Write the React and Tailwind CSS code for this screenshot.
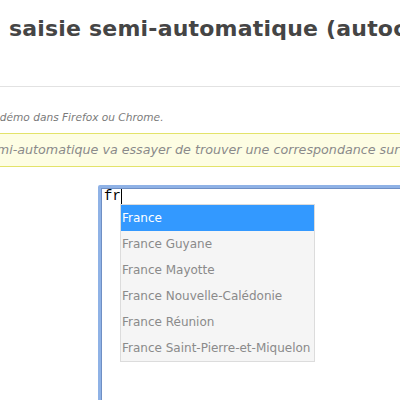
import React from 'react';

const items = [
  'France',
  'France Guyane',
  'France Mayotte',
  'France Nouvelle-Calédonie',
  'France Réunion',
  'France Saint-Pierre-et-Miquelon',
];

export default function App() {
  return (
    <div className="w-[400px] h-[400px] overflow-hidden bg-white relative font-['DejaVu_Sans',sans-serif]">
      {/* Titre */}
      <div className="h-[87px] border-b border-[#e2e2e2] pt-[16px]">
        <h1 className="whitespace-nowrap ml-[-23px] text-[22px] leading-[26px] font-bold text-[#454545] tracking-[0.2px]">
          3. saisie semi-automatique (autocomplétion)
        </h1>
      </div>

      {/* Paragraphe */}
      <p className="mt-[23px] ml-[-13px] whitespace-nowrap italic text-[10.6px] leading-[14px] text-[#7a7a7a]">
        la démo dans Firefox ou Chrome.
      </p>

      {/* Note */}
      <div className="mt-[9px] ml-[-10px] w-[430px] h-[34px] bg-[#fdfde3] border-y border-[#e3e36a] flex items-center">
        <p className="ml-[-1px] whitespace-nowrap italic text-[12.7px] text-[#8a8a8a]">
          emi-automatique va essayer de trouver une correspondance sur
        </p>
      </div>

      {/* Zone de saisie */}
      <div className="mt-[18px] ml-[98px] w-[320px] h-[240px] border-[3px] border-[#8fb2e6] rounded-[2px]">
        <div className="h-full border border-[#6f8fc4] bg-white pl-[2px]">
          <div className="flex items-center h-[15px] font-['Liberation_Mono',monospace] text-[14px] text-black leading-[15px]">
            fr<span className="w-px h-[15px] bg-black"></span>
          </div>
          <ul className="ml-[16px] w-[195px] border border-[#dcdcdc] bg-[#f5f5f5] text-[12px]">
            {items.map((it, i) => (
              <li
                key={it}
                className={
                  i === 0
                    ? 'h-[26px] flex items-center px-[1px] bg-[#3399ff] text-white'
                    : 'h-[26px] flex items-center px-[1px] text-[#8a8a8a]'
                }
              >
                {it}
              </li>
            ))}
          </ul>
        </div>
      </div>
    </div>
  );
}
